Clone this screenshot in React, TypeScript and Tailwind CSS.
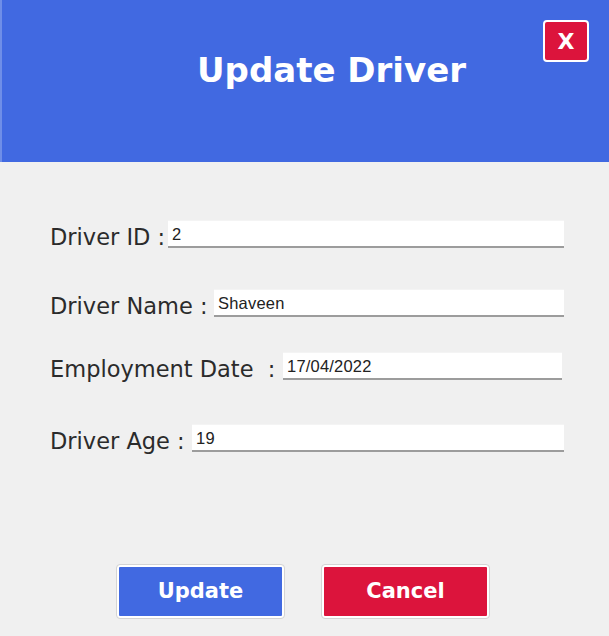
import React from "react";

const fields = [
  { label: "Driver ID :", value: "2", mt: "mt-[58px]", mr: "mr-[45px]", lw: "w-[168px]" },
  { label: "Driver Name :", value: "Shaveen", mt: "mt-[41px]", mr: "mr-[45px]", lw: "w-[214px]" },
  { label: "Employment Date  :", value: "17/04/2022", mt: "mt-[35px]", mr: "mr-[47px]", lw: "w-[283px]" },
  { label: "Driver Age :", value: "19", mt: "mt-[44px]", mr: "mr-[45px]", lw: "w-[192px]" },
];

const Field = ({ label, value, mt, mr, lw }: { label: string; value: string; mt: string; mr: string; lw: string }) => {
  return (
    <div className={`flex items-end ${mt}`}>
      <span className={`${lw} shrink-0 pl-[50px] text-[22.5px] leading-[22px] text-[#2b2b2b] whitespace-pre font-['DejaVu_Sans',sans-serif]`}>
        {label}
      </span>
      <input
        type="text"
        defaultValue={value}
        className={`flex-1 min-w-0 ${mr} h-[28px] bg-white border-t border-t-[#f4f4f4] border-b-2 border-b-[#9c9c9c] pl-[4px] pt-[2px] text-[16.5px] tracking-[0.2px] text-[#222] outline-none font-['Liberation_Sans',sans-serif]`}
      />
    </div>
  );
};

export default function App() {
  return (
    <div className="w-[609px] h-[636px] bg-[#f0f0f0] flex flex-col overflow-hidden">
      <div className="relative h-[162px] bg-[#4169e1] flex justify-center pl-[52px] pt-[48px] border-l-2 border-l-[#6f8ee8]">
        <h1 className="text-white text-[34px] leading-[44px] font-bold font-['DejaVu_Sans',sans-serif]">
          Update Driver
        </h1>
        <button className="absolute top-[20px] left-[541px] w-[46px] h-[42px] bg-[#dc143c] border-2 border-white rounded-[4px] text-white text-[22px] font-semibold font-['DejaVu_Sans',sans-serif] flex items-center justify-center">
          X
        </button>
      </div>

      {fields.map((f) => (
        <Field key={f.label} {...f} />
      ))}

      <div className="flex gap-[38px] pl-[117px] mt-[113px]">
        <button className="w-[167px] h-[53px] bg-[#4169e1] border-2 border-white outline outline-1 outline-[#d4d4d4] rounded-[3px] text-white text-[21px] font-bold font-['DejaVu_Sans',sans-serif]">
          Update
        </button>
        <button className="w-[167px] h-[53px] bg-[#dc143c] border-2 border-white outline outline-1 outline-[#d4d4d4] rounded-[3px] text-white text-[21px] font-bold font-['DejaVu_Sans',sans-serif]">
          Cancel
        </button>
      </div>
    </div>
  );
}
